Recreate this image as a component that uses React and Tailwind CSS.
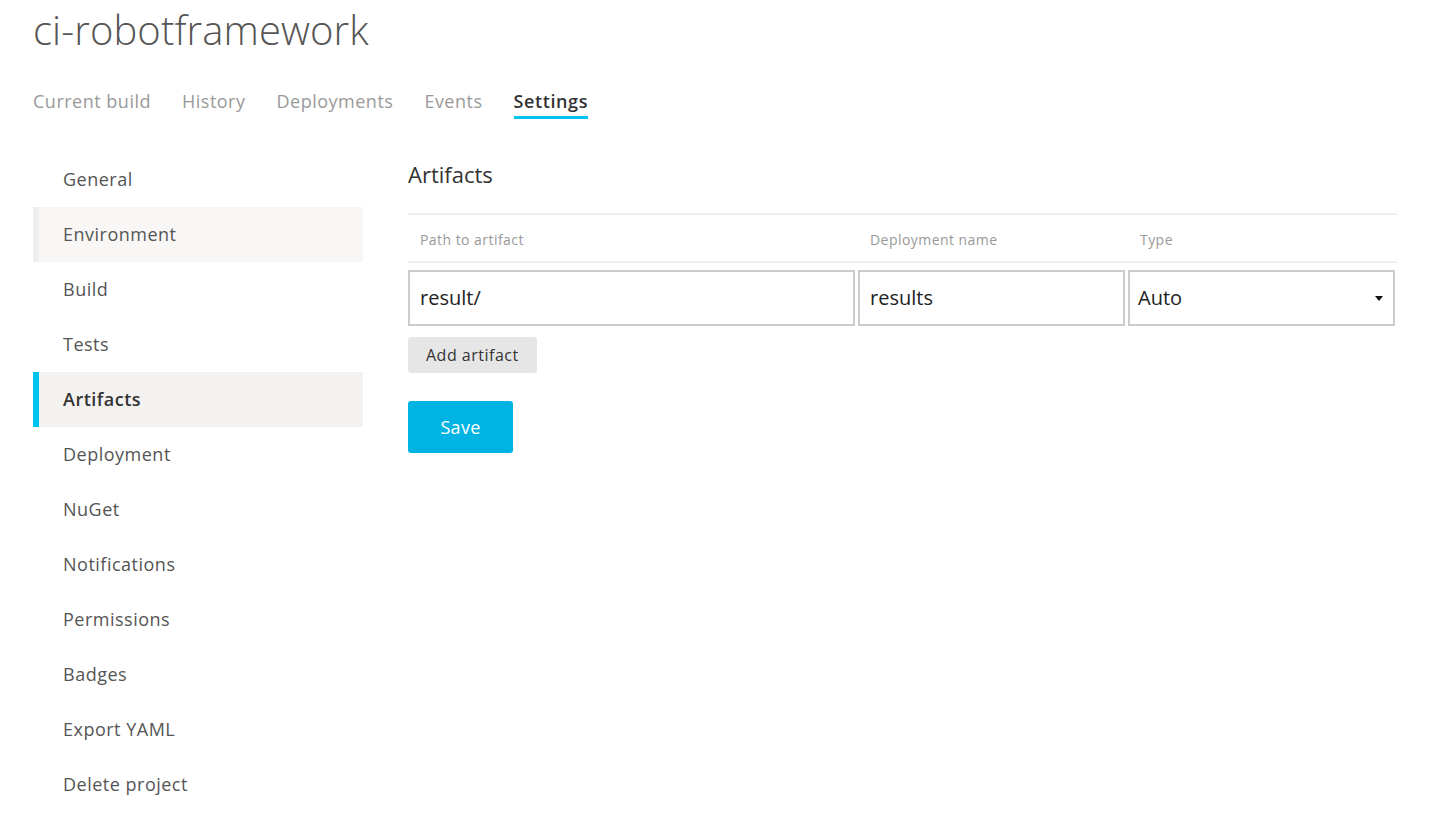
import React from "react";

const tabs = ["Current build", "History", "Deployments", "Events", "Settings"];

const menu = [
    "General",
    "Environment",
    "Build",
    "Tests",
    "Artifacts",
    "Deployment",
    "NuGet",
    "Notifications",
    "Permissions",
    "Badges",
    "Export YAML",
    "Delete project",
];

export default function App() {
    return (
        <div
            className="min-h-screen bg-white px-[33px] pt-[2px] text-[#555]"
            style={{ fontFamily: '"Open Sans", "Noto Sans", sans-serif' }}
        >
            {/* Title */}
            <h1 className="text-[40px] font-light leading-[56px] text-[#555] tracking-[0.1px]">
                ci-robotframework
            </h1>

            {/* Tabs */}
            <ul className="mt-[28px] flex gap-[31px] text-[18px] leading-[30px] tracking-[0.5px]">
                {tabs.map((t) => (
                    <li
                        key={t}
                        className={
                            t === "Settings"
                                ? "border-b-[3px] border-[#00c4f0] font-semibold text-[#333] tracking-[0.6px]"
                                : "border-b-[3px] border-transparent text-[#999]"
                        }
                    >
                        {t}
                    </li>
                ))}
            </ul>

            <div className="mt-[33px] flex">
                {/* Sidebar */}
                <ul className="w-[330px] shrink-0 text-[18px] tracking-[0.5px]">
                    {menu.map((m) => {
                        let cls = "border-l-[6px] border-transparent";
                        if (m === "Environment") cls = "border-l-[6px] border-[#eeeeee] bg-[#f8f7f6]";
                        if (m === "Artifacts") cls = "border-l-[6px] border-[#00c4f0] bg-[#f3f2f1] font-semibold text-[#333]";
                        return (
                            <li key={m} className={`flex h-[55px] items-center pl-[24px] ${cls}`}>
                                {m}
                            </li>
                        );
                    })}
                </ul>

                {/* Content */}
                <div className="ml-[45px] flex-1 pr-[23px]">
                    <h2 className="pt-[7px] text-[22px] leading-[30px] text-[#333]">Artifacts</h2>

                    <div className="mt-[24px] border-t-2 border-[#eeeeee]">
                        <div className="flex h-[48px] items-center border-b-2 border-[#eeeeee] pt-[2px] text-[14px] tracking-[0.45px] text-[#999]">
                            <div className="w-[450px] pl-[12px]">Path to artifact</div>
                            <div className="w-[270px] pl-[12px]">Deployment name</div>
                            <div className="pl-[12px]">Type</div>
                        </div>
                        <div className="mt-[7px] flex gap-[3px] text-[20px] text-[#222]">
                            <div className="flex h-[56px] w-[447px] items-center border-2 border-[#cccccc] pl-[10px]">
                                result/
                            </div>
                            <div className="flex h-[56px] w-[267px] items-center border-2 border-[#cccccc] pl-[10px]">
                                results
                            </div>
                            <div className="flex h-[56px] w-[267px] items-center justify-between border-2 border-[#cccccc] pl-[8px] pr-[10px]">
                                <span>Auto</span>
                                <svg width="8" height="5" viewBox="0 0 8 5">
                                    <path d="M0 0h8L4 5z" fill="#111" />
                                </svg>
                            </div>
                        </div>
                    </div>

                    <button className="mt-[11px] flex h-[36px] items-center rounded-[3px] bg-[#e6e6e6] px-[18px] text-[16px] tracking-[0.5px] text-[#333]">
                        Add artifact
                    </button>

                    <button className="mt-[28px] flex h-[52px] w-[105px] items-center justify-center rounded-[3px] bg-[#00b3e2] text-[18px] tracking-[0.3px] text-white">
                        Save
                    </button>
                </div>
            </div>
        </div>
    );
}
